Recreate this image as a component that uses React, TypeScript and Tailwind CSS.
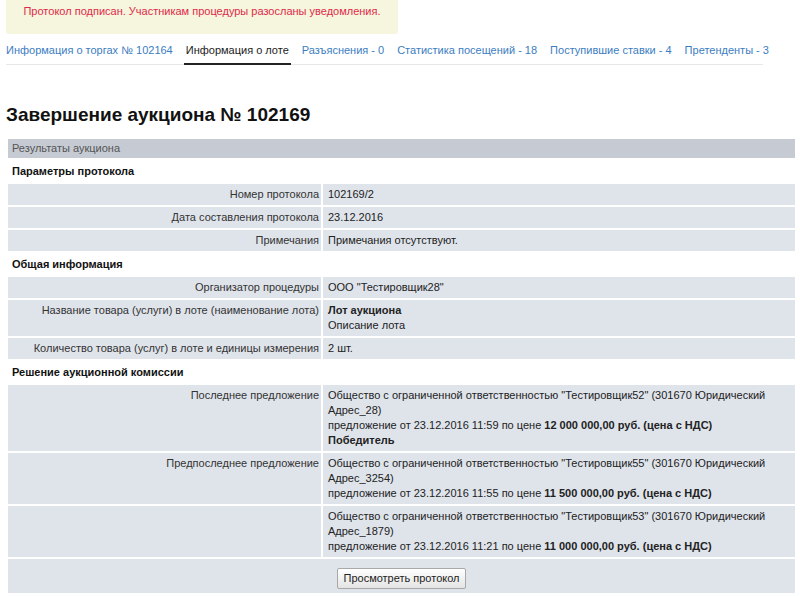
import React from "react";

const tabs = [
  { label: "Информация о торгах № 102164", active: false },
  { label: "Информация о лоте", active: true },
  { label: "Разъяснения - 0", active: false },
  { label: "Статистика посещений - 18", active: false },
  { label: "Поступившие ставки - 4", active: false },
  { label: "Претенденты - 3", active: false },
];

type Row = { label: string; value: React.ReactNode };

function Bid({ name, addr, date, price, winner }: { name: string; addr: string; date: string; price: string; winner?: boolean }) {
  return (
    <>
      Общество с ограниченной ответственностью "{name}" (301670 Юридический {addr})
      <br />
      предложение от {date} по цене <b>{price} руб. (цена с НДС)</b>
      {winner && (
        <>
          <br />
          <b>Победитель</b>
        </>
      )}
    </>
  );
}

const sections: { title: string; rows: Row[] }[] = [
  {
    title: "Параметры протокола",
    rows: [
      { label: "Номер протокола", value: "102169/2" },
      { label: "Дата составления протокола", value: "23.12.2016" },
      { label: "Примечания", value: "Примечания отсутствуют." },
    ],
  },
  {
    title: "Общая информация",
    rows: [
      { label: "Организатор процедуры", value: 'ООО "Тестировщик28"' },
      {
        label: "Название товара (услуги) в лоте (наименование лота)",
        value: (
          <>
            <b>Лот аукциона</b>
            <br />
            Описание лота
          </>
        ),
      },
      { label: "Количество товара (услуг) в лоте и единицы измерения", value: "2 шт." },
    ],
  },
  {
    title: "Решение аукционной комиссии",
    rows: [
      {
        label: "Последнее предложение",
        value: <Bid name="Тестировщик52" addr="Адрес_28" date="23.12.2016 11:59" price="12 000 000,00" winner />,
      },
      {
        label: "Предпоследнее предложение",
        value: <Bid name="Тестировщик55" addr="Адрес_3254" date="23.12.2016 11:55" price="11 500 000,00" />,
      },
      {
        label: "",
        value: <Bid name="Тестировщик53" addr="Адрес_1879" date="23.12.2016 11:21" price="11 000 000,00" />,
      },
    ],
  },
];

export default function App() {
  return (
    <div className="w-[800px] h-[596px] overflow-hidden bg-white font-['Liberation_Sans',Arial,sans-serif] text-[11px] leading-[15px] text-[#111]">
      <div className="ml-[6px] w-[392px] h-[34px] bg-[#f6f5dd] rounded-b-[3px] pt-[4px] text-center leading-[14px] text-[#e02a4a]">
        Протокол подписан. Участникам процедуры разосланы уведомления.
      </div>

      <div className="ml-[6px] w-[757px] mt-[6px] flex gap-[13px] border-b border-[#e8e8e8] leading-[14px] whitespace-nowrap">
        {tabs.map((t) => (
          <div
            key={t.label}
            className={
              t.active
                ? "-mx-[2px] px-[2px] pt-[3px] pb-[5px] border-b-2 border-[#222] text-[#222] -mb-px"
                : "pt-[3px] pb-[7px] text-[#3b7dc2]"
            }
          >
            {t.label}
          </div>
        ))}
      </div>

      <h1 className="ml-[6px] mt-[38px] text-[19px] font-bold leading-[24px] text-[#111]">
        Завершение аукциона № 102169
      </h1>

      <table className="ml-[6px] mt-[10px] w-[791px] border-separate border-spacing-[2px]">
        <tbody>
          <tr>
            <td colSpan={2} className="bg-[#c6cbd3] px-[4px] py-[2px] text-[#555]">
              Результаты аукциона
            </td>
          </tr>
          {sections.map((s) => (
            <React.Fragment key={s.title}>
              <tr>
                <td colSpan={2} className="px-[4px] pt-[4px] pb-[3px] font-bold text-[#111]">
                  {s.title}
                </td>
              </tr>
              {s.rows.map((r, i) => (
                <tr key={i}>
                  <td className="w-[313px] bg-[#dfe4eb] pl-[3px] pr-[2px] py-[3px] text-right align-top text-[#333]">
                    {r.label}
                  </td>
                  <td className="bg-[#dfe4eb] pl-[5px] pr-[4px] py-[3px] align-top text-[#222]">{r.value}</td>
                </tr>
              ))}
            </React.Fragment>
          ))}
          <tr>
            <td colSpan={2} className="bg-[#dfe4eb] pt-[9px] pb-[4px] text-center">
              <button className="h-[21px] px-[5px] rounded-[2px] border border-[#a8a8a8] bg-gradient-to-b from-white to-[#e4e4e4] text-[11px] leading-[15px] text-[#222]">
                Просмотреть протокол
              </button>
            </td>
          </tr>
        </tbody>
      </table>
    </div>
  );
}
